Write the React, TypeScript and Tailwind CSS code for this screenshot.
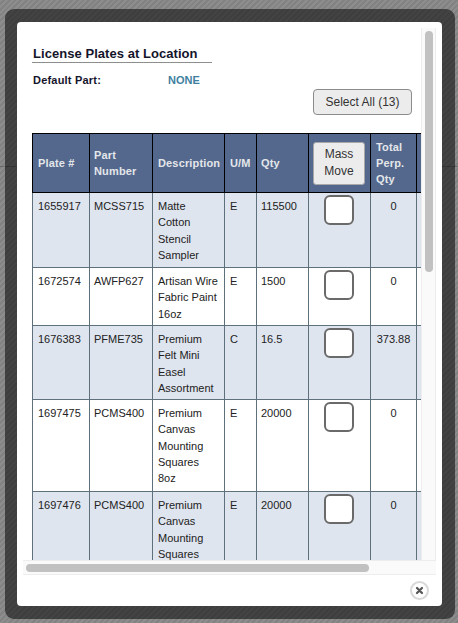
const rows = [
  { plate: "1655917", part: "MCSS715", desc: ["Matte", "Cotton", "Stencil", "Sampler"], um: "E", qty: "115500", perp: "0", h: "h-[75px]" },
  { plate: "1672574", part: "AWFP627", desc: ["Artisan Wire", "Fabric Paint", "16oz"], um: "E", qty: "1500", perp: "0", h: "h-[58px]" },
  { plate: "1676383", part: "PFME735", desc: ["Premium", "Felt Mini", "Easel", "Assortment"], um: "C", qty: "16.5", perp: "373.88", h: "h-[74px]" },
  { plate: "1697475", part: "PCMS400", desc: ["Premium", "Canvas", "Mounting", "Squares", "8oz"], um: "E", qty: "20000", perp: "0", h: "h-[92px]" },
  { plate: "1697476", part: "PCMS400", desc: ["Premium", "Canvas", "Mounting", "Squares"], um: "E", qty: "20000", perp: "0", h: "h-[92px]" },
];

const th = "border border-black bg-[#53688c] pr-[5px] text-left align-middle text-[11px] leading-[16px] font-bold tracking-[0.15px] text-[#e4e6ea]";
const td = "border border-[#5d707c] pr-[5px] pt-[5px] align-top text-[11px] leading-[16.3px] text-[#222222]";

export default function App() {
  return (
    <div className="relative h-[623px] w-[458px] overflow-hidden bg-[#878787] bg-[repeating-linear-gradient(135deg,#8d8d8d_0,#8d8d8d_2px,#828282_2px,#828282_4px)] pt-[9px] pl-[5px] font-['Liberation_Sans',Arial,sans-serif]">
      <div className="absolute top-[166px] left-0 h-px w-full bg-black/20"></div>
      <div className="relative h-[610px] w-[450px] rounded-[9px] bg-black/[0.52] pt-[13px] pl-[12px]">
        <div className="flex h-[584px] w-[425px] flex-col rounded-[4px] bg-white pt-[6px] pl-[6px]">
          <div className="flex h-[547px] w-[413px] flex-col">
            <div className="flex h-[532px] w-[413px]">
              <div className="h-[532px] w-[398px] overflow-hidden">
                <div className="w-[389px] pt-[18px] pl-[9px]">
                  <h2 className="w-[180px] border-b border-[#8e8e8e] pb-[1px] pl-px text-[13px] leading-[15px] font-bold tracking-[0.05px] text-[#14142b]">
                    License Plates at Location
                  </h2>
                  <div className="mt-[11px] flex h-[13px] items-center pl-px text-[11px] leading-[13px] font-bold">
                    <span className="w-[135px] tracking-[0.2px] text-[#14142b]">Default Part:</span>
                    <span className="text-[#3f7f9f]">NONE</span>
                  </div>
                  <div className="mt-[2px] flex justify-end">
                    <button className="h-[26px] w-[99px] rounded-[4px] border border-[#8c8c8c] bg-[#ececec] text-[12px] text-[#333333]">
                      Select All (13)
                    </button>
                  </div>
                  <table className="mt-[18px] w-[393px] table-fixed border-collapse">
                    <colgroup>
                      <col className="w-[57px]" />
                      <col className="w-[63px]" />
                      <col className="w-[72px]" />
                      <col className="w-[32px]" />
                      <col className="w-[52px]" />
                      <col className="w-[62px]" />
                      <col className="w-[46px]" />
                      <col className="w-[9px]" />
                    </colgroup>
                    <thead>
                      <tr className="h-[59px]">
                        <th className={`${th} pl-[5px]`}>Plate #</th>
                        <th className={`${th} pl-[4px]`}>Part Number</th>
                        <th className={`${th} pl-[5px]`}>Description</th>
                        <th className={`${th} pl-[5px]`}>U/M</th>
                        <th className={`${th} pl-[4px]`}>Qty</th>
                        <th className={`${th} pl-[4px]`}>
                          <button className="block h-[43px] w-[52px] rounded-[3px] border border-[#a8a8a8] bg-[#ececec] text-center text-[12px] leading-[17px] font-normal tracking-normal text-[#333333]">
                            Mass Move
                          </button>
                        </th>
                        <th className={`${th} pl-[5px]`}>Total Perp. Qty</th>
                        <th className={`${th} pl-[5px]`}></th>
                      </tr>
                    </thead>
                    <tbody>
                      {rows.map((r, i) => (
                        <tr key={r.plate} className={`${r.h} ${i % 2 === 0 ? "bg-[#dfe5ef]" : "bg-white"}`}>
                          <td className={`${td} pl-[5px]`}>{r.plate}</td>
                          <td className={`${td} pl-[4px]`}>{r.part}</td>
                          <td className={`${td} pl-[5px]`}>
                            {r.desc.map((d) => (
                              <div key={d}>{d}</div>
                            ))}
                          </td>
                          <td className={`${td} pl-[5px]`}>{r.um}</td>
                          <td className={`${td} pl-[4px]`}>{r.qty}</td>
                          <td className={`${td} !pt-[2px] pl-[4px] !pr-[6px]`}>
                            <div className="mx-auto h-[30px] w-[30px] rounded-[6px] border-[2px] border-[#6a6a6a] bg-white"></div>
                          </td>
                          <td className={`${td} pl-[5px] text-center`}>{r.perp}</td>
                          <td className={`${td} pl-[5px]`}></td>
                        </tr>
                      ))}
                    </tbody>
                  </table>
                </div>
              </div>
              <div className="flex h-[532px] w-[15px] justify-center border-x border-[#ededed] bg-[#fafafa] pt-[3px]">
                <div className="h-[241px] w-[8px] rounded-full bg-[#c1c1c1]"></div>
              </div>
            </div>
            <div className="flex h-[15px] w-[413px] items-center border-y border-[#ededed] bg-[#fafafa] pl-[3px]">
              <div className="h-[8px] w-[343px] rounded-full bg-[#c1c1c1]"></div>
            </div>
          </div>
          <div className="mt-[6px] flex w-[406px] justify-end">
            <div className="flex h-[19px] w-[19px] items-center justify-center rounded-full border-[2px] border-[#d8d8d8] bg-white">
              <svg width="9" height="9" viewBox="0 0 9 9">
                <path d="M2 2L7 7M7 2L2 7" stroke="#555555" strokeWidth="2.2" strokeLinecap="round" />
              </svg>
            </div>
          </div>
        </div>
      </div>
    </div>
  );
}
